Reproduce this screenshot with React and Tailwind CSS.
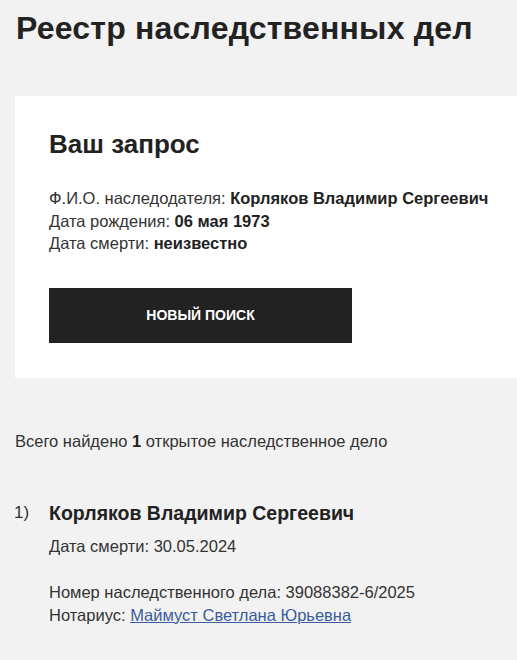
import React from 'react';

export default function App() {
  return (
    <div className="min-h-[660px] bg-[#f2f2f2] text-[#222] font-['Liberation_Sans',Arial,sans-serif] overflow-hidden">
      <h1 className="px-4 pt-[8px] text-[32px] leading-[40px] font-bold tracking-[0.2px]">
        Реестр наследственных дел
      </h1>

      {/* Request card */}
      <div className="ml-[15px] mt-[48px] bg-white pl-[34px] pt-[32px] pb-[35px]">
        <h2 className="text-[26px] leading-[32px] font-bold">Ваш запрос</h2>
        <div className="mt-[27px] text-[16.5px] leading-[22.5px] text-[#333]">
          <div>
            Ф.И.О. наследодателя: <b className="text-[#222]">Корляков Владимир Сергеевич</b>
          </div>
          <div>
            Дата рождения: <b className="text-[#222]">06 мая 1973</b>
          </div>
          <div>
            Дата смерти: <b className="text-[#222]">неизвестно</b>
          </div>
        </div>
        <button className="mt-[33px] w-[303px] h-[55px] bg-[#222] text-white text-[14px] font-bold uppercase">
          Новый поиск
        </button>
      </div>

      <p className="px-[15px] mt-[52px] text-[16.5px] leading-[22px] text-[#333]">
        Всего найдено <b className="text-[#222]">1</b> открытое наследственное дело
      </p>

      <div className="mt-[48px] flex px-[14px]">
        <div className="w-[35px] text-[17px] leading-[26px] text-[#333]">1)</div>
        <div>
          <div className="text-[19.5px] leading-[26px] font-bold">Корляков Владимир Сергеевич</div>
          <div className="mt-[9px] text-[16.5px] leading-[22px] text-[#333]">Дата смерти: 30.05.2024</div>
          <div className="mt-[24px] text-[16.5px] leading-[23px] text-[#333]">
            <div>Номер наследственного дела: 39088382-6/2025</div>
            <div>
              Нотариус: <a href="#" className="text-[#3a5c9e] underline">Маймуст Светлана Юрьевна</a>
            </div>
          </div>
        </div>
      </div>
    </div>
  );
}
